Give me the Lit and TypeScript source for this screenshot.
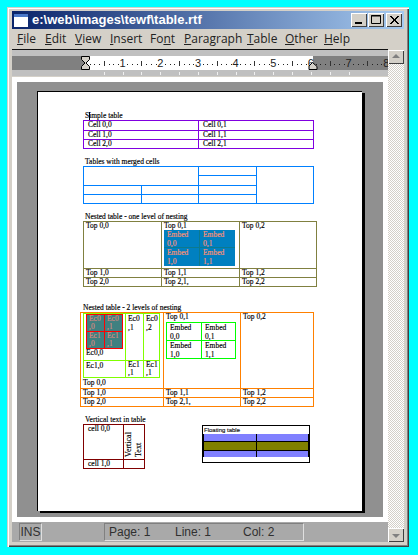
import { LitElement, html, css, svg } from "lit";
import { customElement } from "lit/decorators.js";

const X0 = 73; // ruler zero inside the 376-wide ruler svg (x=85 on page)
const INCH = 37.65;

@customElement("app-root")
export class AppRoot extends LitElement {
  static styles = css`
    :host { display: block; width: 418px; height: 555px; background: #00ffff; padding: 7px 0 0 7px; box-sizing: border-box; overflow: hidden; }
    .win { width: 402px; height: 540px; box-sizing: border-box; padding: 4px 5px 5px; background: #d4d0c8; display: flex; flex-direction: column;
      box-shadow: inset 1px 1px 0 #d4d0c8, inset 2px 2px 0 #fff, inset -1px -1px 0 #404040, inset -2px -2px 0 #808080; }
    .title { height: 18px; flex: none; display: flex; align-items: center; background: linear-gradient(90deg, #0a246a, #a6caf0); padding: 0 2px; box-sizing: border-box; }
    .appicon { width: 14px; height: 13px; background: #fff; border-top: 3px solid #4a78c8; box-sizing: border-box; flex: none; margin-right: 4px; }
    .caption { flex: 1; color: #fff; font: bold 13px/18px "Liberation Sans", sans-serif; white-space: nowrap; }
    .wb { width: 16px; height: 14px; flex: none; background: #d4d0c8; margin-left: 1px; box-sizing: border-box; display: block;
      box-shadow: inset 1px 1px 0 #fff, inset -1px -1px 0 #404040; }
    .wbx { margin-left: 2px; }
    .menu { height: 20px; flex: none; display: flex; align-items: center; padding-left: 5px; color: #222; font: 12px/20px "Open Sans", "Liberation Sans", sans-serif; }
    .menu span { flex: none; }
    .m1 { width: 28px; } .m2 { width: 30px; } .m3 { width: 35px; } .m4 { width: 40px; } .m5 { width: 34px; } .m6 { width: 63px; } .m7 { width: 38px; } .m8 { width: 39px; }
    .body { flex: 1; display: flex; min-height: 0; }
    .main { width: 376px; flex: none; display: flex; flex-direction: column; border-top: 1px solid #111; box-sizing: border-box; }
    .ruler { height: 27px; flex: none; position: relative; display: block; }
    .ruler svg { display: block; }
    .view { flex: 1; background: #fff; padding: 5px; box-sizing: border-box; display: flex; min-height: 0; }
    .gray { flex: 1; background: #909090; padding: 9px 0 0 20px; box-sizing: border-box; }
    .page { width: 325px; height: 420px; box-sizing: border-box; background: #fff; border: 1px solid #000; border-width: 1px 0 0 1px; box-shadow: 3px 2px 0 #000; padding-top: 20px;
      font: 7.5px/8px "Liberation Serif", serif; color: #000; -webkit-text-stroke: 0.15px currentColor; }
    .status { height: 20px; flex: none; background: #a9a9a9; display: flex; align-items: stretch; padding: 1px 0 1px 7px; box-sizing: border-box; color: #303030; font: 12px/17px "Liberation Sans", sans-serif; }
    .ins { width: 23px; border: 1px solid; border-color: #808080 #e0e0e0 #e0e0e0 #808080; box-sizing: border-box; text-align: center; }
    .panel { width: 200px; margin-left: 62px; border: 1px solid; border-color: #808080 #e0e0e0 #e0e0e0 #808080; box-sizing: border-box; display: flex; padding-left: 4px; }
    .p1 { width: 66px; } .p2 { width: 68px; }
    .scroll { width: 16px; flex: none; margin-top: 1px; display: flex; flex-direction: column; justify-content: space-between;
      background: repeating-conic-gradient(#fff 0 25%, #d4d0c8 0 50%) 0 0 / 2px 2px; }
    .sb { width: 16px; height: 14px; display: block; background: #d4d0c8; box-shadow: inset 1px 1px 0 #fff, inset -1px -1px 0 #404040; }

    .sec { margin-left: 45px; }
    .t { height: 8px; white-space: nowrap; padding-left: 2px; position: relative; }
    .caret { display: inline-block; width: 1px; height: 8px; background: #000; margin: 0 -1px 0 0; vertical-align: top; }
    .g { display: grid; gap: 1px; padding: 1px; background: var(--c); width: max-content; }
    .c { background: #fff; padding-left: 2px; white-space: nowrap; overflow: hidden; min-width: 0; }
    .wrap { white-space: normal; word-break: break-all; }
    .simple { --c: #8000e0; grid-template-columns: 114px 114px; grid-template-rows: 9px 8px 8px; margin-bottom: 9px; }
    .simple .c { padding-left: 4px; }
    .merged { --c: #0080ff; grid-template-columns: 57px 56px 57px 56px; grid-template-rows: 8px 9px 8px 8px; margin-bottom: 9px; }
    .a2 { grid-column: 1 / 3; grid-row: 1 / 3; }
    .d4 { grid-column: 4; grid-row: 1 / 5; }
    .n1 { --c: #808040; grid-template-columns: 77px 77px 76px; grid-template-rows: 46px 8px 8px; margin-bottom: 17px; }
    .emb { --c: #0c7a8e; grid-template-columns: 35px 35px; grid-template-rows: 17px 18px; background: var(--c); padding: 0; }
    .emb .c { background: #0080c0; color: #ff9070; line-height: 9px; padding-left: 3px; white-space: normal; }
    .n2title { margin-left: 43px; }
    .n2 { --c: #ff8000; grid-template-columns: 82px 76px 72px; grid-template-rows: 75px 8px 8px; margin-left: 42px; margin-bottom: 9px; }
    .tight { padding: 0; }
    .lime { --c: #80ff00; grid-template-columns: 41px 17px 15px; grid-template-rows: 46px 16px; margin: 0 0 1px 2px; }
    .lime .c { line-height: 9px; padding-left: 2px; }
    .lime .c.low2 { line-height: 8px; }
    .red { --c: #ff0000; grid-template-columns: 17px 17px; grid-template-rows: 16px 16px; margin: 0 0 0 2px; }
    .lime .c.redhold { padding: 0; }
    .red .c { background: #408080; color: #d98a80; line-height: 8px; padding-left: 2px; white-space: normal; word-break: normal; }
    .green { --c: #00ff00; grid-template-columns: 34px 33px; grid-template-rows: 17px 17px; margin-top: 1px; }
    .green .c { line-height: 9px; padding-left: 3px; white-space: normal; }
    .plain { padding-left: 2px; line-height: 8px; }
    .bottom { display: flex; margin-left: 45px; align-items: flex-start; }
    .vcol { width: 119px; flex: none; }
    .vt { --c: #800000; grid-template-columns: 39px 20px; grid-template-rows: 34px 8px; }
    .vt .c:first-child, .vt .low { padding-left: 4px; }
    .vtext { writing-mode: vertical-rl; transform: rotate(180deg); line-height: 10px; padding: 2px 0 0 0; white-space: normal; font-size: 8px; height: 32px; }
    .vhold { padding: 0; display: flex; align-items: stretch; justify-content: center; }
    .fl { margin-top: 9px; width: 108px; height: 38px; box-sizing: border-box; border: 1px solid #000; background: #fff; display: flex; flex-direction: column; font: 6px/8px "Liberation Sans", sans-serif; color: #111; }
    .fl .t { height: 8px; padding-left: 1px; }
    .ft { --c: #000; width: auto; margin: 0 0 3px 0; grid-template-columns: 1fr 1fr; grid-template-rows: 7px 8px 6px; padding: 0 1px; }
    .ft .c { background: #8080ff; padding: 0; }
    .ft .ol { background: #808000; }
  `;

  private rulerSvg() {
    const ticks = [];
    for (let i = 0; i <= 64; i++) {
      const x = X0 + (i * INCH) / 8;
      if (i % 8 === 0) {
        if (i > 0) ticks.push(svg`<text x=${x} y="11" text-anchor="middle" font-family="Liberation Sans, sans-serif" font-size="11" fill="#222">${i / 8}</text>`);
      } else if (i % 4 === 0) {
        ticks.push(svg`<rect x=${Math.round(x)} y="5" width="1" height="5" fill="#333"/>`);
      } else if (x < 372) {
        ticks.push(svg`<rect x=${Math.round(x)} y="8" width="1" height="1" fill="#222"/>`);
      }
    }
    const marks = [];
    for (let i = 1; i < 15; i++) {
      const x = Math.round(X0 + (i * INCH) / 2);
      if (x < 374) marks.push(svg`<rect x=${x} y="22" width="1" height="3" fill="#f0f0f0"/>`);
    }
    return html`<svg width="376" height="26" viewBox="0 0 376 26">
      <rect width="376" height="26" fill="#c0c0c0"/>
      <rect y="6" width="73" height="14" fill="#808080"/>
      <rect x="73" y="6" width="228" height="14" fill="#fff"/>
      <rect x="301" y="6" width="75" height="14" fill="#808080"/>
      <g transform="translate(0,6)">${ticks}</g>
      ${marks}
      <path d="M69.5 6.5h8v3l-3.5 3.5 3.5 3.5v3h-8v-3l3.5-3.5-3.5-3.5z" fill="#d4d0c8" stroke="#000"/>
      <path d="M297 19.5v-3.5l3.5-3.5 4.5 4v3z" fill="#d4d0c8" stroke="#000"/>
    </svg>`;
  }

  render() {
    return html`<div class="win">
      <div class="title">
        <div class="appicon"></div>
        <div class="caption">e:\\web\\images\\tewf\\table.rtf</div>
        <svg class="wb" viewBox="0 0 16 14"><rect x="4" y="9" width="7" height="2" fill="#000"/></svg>
        <svg class="wb" viewBox="0 0 16 14"><path d="M3.5 2.5h9v8h-9z M3 3h10" fill="none" stroke="#000"/></svg>
        <svg class="wb wbx" viewBox="0 0 16 14"><path d="M4 3l8 8M5 3l8 8M12 3l-8 8M13 3l-8 8" stroke="#000" fill="none"/></svg>
      </div>
      <div class="menu">
        <span class="m1"><u>F</u>ile</span><span class="m2"><u>E</u>dit</span><span class="m3"><u>V</u>iew</span><span class="m4"><u>I</u>nsert</span><span class="m5">Fo<u>n</u>t</span><span class="m6"><u>P</u>aragraph</span><span class="m7"><u>T</u>able</span><span class="m8"><u>O</u>ther</span><span><u>H</u>elp</span>
      </div>
      <div class="body">
        <div class="main">
          <div class="ruler">${this.rulerSvg()}</div>
          <div class="view"><div class="gray"><div class="page">
            <div class="sec">
              <div class="t">S<span class="caret"></span>imple table</div>
              <div class="g simple">
                <div class="c">Cell 0,0</div><div class="c">Cell 0,1</div>
                <div class="c">Cell 1,0</div><div class="c">Cell 1,1</div>
                <div class="c">Cell 2,0</div><div class="c">Cell 2,1</div>
              </div>
              <div class="t">Tables with merged cells</div>
              <div class="g merged">
                <div class="c a2"></div><div class="c"></div><div class="c d4"></div>
                <div class="c"></div>
                <div class="c"></div><div class="c"></div><div class="c"></div>
                <div class="c"></div><div class="c"></div><div class="c"></div>
              </div>
              <div class="t">Nested table - one level of nesting</div>
              <div class="g n1">
                <div class="c">Top 0,0</div>
                <div class="c">Top 0,1
                  <div class="g emb">
                    <div class="c">Embed 0,0</div><div class="c">Embed 0,1</div>
                    <div class="c">Embed 1,0</div><div class="c">Embed 1,1</div>
                  </div>
                </div>
                <div class="c">Top 0,2</div>
                <div class="c">Top 1,0</div><div class="c">Top 1,1</div><div class="c">Top 1,2</div>
                <div class="c">Top 2,0</div><div class="c">Top 2,1,</div><div class="c">Top 2,2</div>
              </div>
            </div>
            <div class="t n2title">Nested table - 2 levels of nesting</div>
            <div class="g n2">
              <div class="c tight">
                <div class="g lime">
                  <div class="c redhold">
                    <div class="g red">
                      <div class="c">Ec0 ,0</div><div class="c">Ec0 ,1</div>
                      <div class="c">Ec1 ,0</div><div class="c">Ec1 ,1</div>
                    </div>
                    <div class="plain">Ec0,0</div>
                  </div>
                  <div class="c wrap">Ec0 ,1</div><div class="c wrap">Ec0 ,2</div>
                  <div class="c">Ec1,0</div><div class="c wrap low2">Ec1 ,1</div><div class="c wrap low2">Ec1 ,1</div>
                </div>
                <div class="plain">Top 0,0</div>
              </div>
              <div class="c">Top 0,1
                <div class="g green">
                  <div class="c">Embed 0,0</div><div class="c">Embed 0,1</div>
                  <div class="c">Embed 1,0</div><div class="c">Embed 1,1</div>
                </div>
              </div>
              <div class="c">Top 0,2</div>
              <div class="c">Top 1,0</div><div class="c">Top 1,1</div><div class="c">Top 1,2</div>
              <div class="c">Top 2,0</div><div class="c">Top 2,1,</div><div class="c">Top 2,2</div>
            </div>
            <div class="bottom">
              <div class="vcol">
                <div class="t">Vertical text in table</div>
                <div class="g vt">
                  <div class="c">cell 0,0</div>
                  <div class="c vhold"><div class="vtext">Vertical Text</div></div>
                  <div class="c low">cell 1,0</div><div class="c"></div>
                </div>
              </div>
              <div class="fl">
                <div class="t">Floating table</div>
                <div class="g ft">
                  <div class="c"></div><div class="c"></div>
                  <div class="c ol"></div><div class="c ol"></div>
                  <div class="c"></div><div class="c"></div>
                </div>
              </div>
            </div>
          </div></div></div>
          <div class="status">
            <div class="ins">INS</div>
            <div class="panel"><span class="p1">Page: 1</span><span class="p2">Line: 1</span><span>Col: 2</span></div>
          </div>
        </div>
        <div class="scroll">
          <svg class="sb" viewBox="0 0 16 14"><path d="M8 4l4 4H4z" fill="#808080"/></svg>
          <svg class="sb" viewBox="0 0 16 14"><path d="M8 10L4 6h8z" fill="#808080"/></svg>
        </div>
      </div>
    </div>`;
  }
}
